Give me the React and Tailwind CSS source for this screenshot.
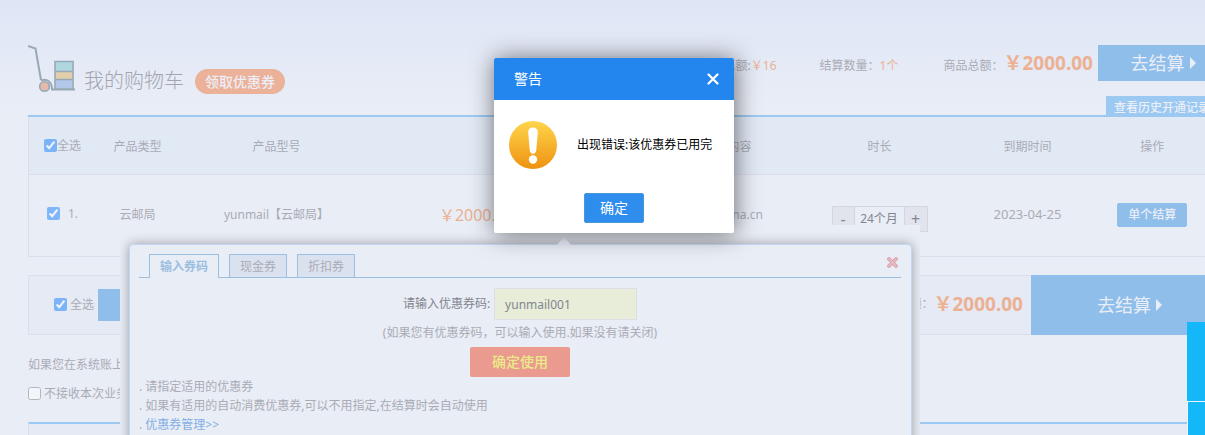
import React from "react";

const FONT = "font-['Noto_Sans','Noto_Sans_CJK_SC',sans-serif]";

function CartIcon() {
  return (
    <svg width="48" height="48" viewBox="0 0 48 48" fill="none" className="shrink-0" aria-hidden="true">
      <path d="M0 1 L7.500 3.500 L13 35" stroke="#98a9b6" strokeWidth="2" />
      <path d="M13 35.500 C19 33 24 37 24 44.500 H47" stroke="#98a9b6" strokeWidth="2" />
      <path d="M14 38 C18 37 21 40 21.500 44" stroke="#98a9b6" strokeWidth="1" />
      <rect x="27" y="17" width="17.500" height="9.500" fill="#b0d7e0" />
      <rect x="27" y="27" width="17.500" height="7" fill="#e2cea9" />
      <rect x="27" y="35" width="17.500" height="8.500" fill="#b3c7ea" />
      <path d="M27 16.500 H45 V44 H27 Z M27 26.500 H45 M27 34.500 H45" stroke="#98a9b6" strokeWidth="1.600" />
      <circle cx="16.500" cy="41.500" r="4.800" fill="#e6b9a8" stroke="#98a9b6" strokeWidth="1.600" />
    </svg>
  );
}

function Arrow() {
  return (
    <svg width="6" height="12" viewBox="0 0 6 12" aria-hidden="true">
      <path d="M0 0 L6 6 L0 12 Z" fill="#e9edf6" />
    </svg>
  );
}

function Check({ label, checked, gap }) {
  return (
    <label className={"inline-flex items-center whitespace-nowrap " + gap}>
      <input type="checkbox" defaultChecked={checked} className="m-0 size-[13px] opacity-45" />
      {label}
    </label>
  );
}

function Header() {
  return (
    <header className="relative flex h-[115px] items-start">
      <div className="flex items-start pt-[45px]">
        <CartIcon />
        <h1 className="ml-2 mt-5 text-xl leading-8 font-light text-[#a3a5af]">我的购物车</h1>
        <button className="ml-[11px] mt-6 h-[25px] rounded-full bg-[#ecb199] px-2.5 text-sm leading-[25px] font-medium text-[#eceef7]">
          领取优惠券
        </button>
      </div>
      <div className="ml-auto flex items-start pt-[45px] leading-[42px]">
        <p className="mr-[43px]">总额:<span className="text-[#ecb193]">￥16</span></p>
        <p className="mr-[45px]">结算数量：<span className="text-[#ecb193]">1个</span></p>
        <p className="flex">
          商品总额：
          <strong className="mr-[5px] text-[19px] leading-9 font-bold text-[#ecb193]">￥2000.00</strong>
        </p>
        <button className="flex h-9 w-[130px] items-center justify-center gap-[5px] bg-[#8fbeeb] text-lg text-[#e9edf6]">
          去结算 <Arrow />
        </button>
      </div>
      <a href="#history" className="absolute right-0 bottom-0 h-[19px] w-[122px] overflow-hidden bg-[#9cc9f2] px-2 leading-6 font-medium whitespace-nowrap text-[#eceff8]">
        查看历史开通记录
      </a>
    </header>
  );
}

function CartTable() {
  return (
    <table className="w-full table-fixed border-collapse border-x border-b border-[#dcdfea] text-center">
      <colgroup>
        <col className="w-[58px]" />
        <col className="w-[102px]" />
        <col className="w-[176px]" />
        <col className="w-[224px]" />
        <col className="w-[86px]" />
        <col className="w-[106px]" />
        <col className="w-[198px]" />
        <col className="w-[98px]" />
        <col className="w-[152px]" />
      </colgroup>
      <thead>
        <tr className="h-[57px] border-b border-[#dcdfea] bg-[#e1e9f5] *:p-0 *:pt-[3px] *:font-normal">
          <th className="text-left"><span className="pl-[15px]"><Check label="全选" checked gap="gap-0" /></span></th>
          <th>产品类型</th>
          <th>产品型号</th>
          <th></th>
          <th></th>
          <th>服务内容</th>
          <th>时长</th>
          <th>到期时间</th>
          <th>操作</th>
        </tr>
      </thead>
      <tbody>
        <tr className="h-[82px] *:p-0">
          <td className="text-left"><span className="pl-[18px]"><Check label="1." checked gap="gap-2" /></span></td>
          <td>云邮局</td>
          <td>yunmail【云邮局】</td>
          <td className="text-base text-[#ecb193]">￥2000.00</td>
          <td></td>
          <td><span className="pl-6">china.cn</span></td>
          <td>
            <div className="mx-auto mt-2 flex h-[26px] w-24 border border-[#d3d6df] text-[#83858e]">
              <button className="w-[22px] border-r border-[#d3d6df] bg-[#e1e4ed] text-base leading-5">-</button>
              <span className="flex-1 leading-6">24个月</span>
              <button className="w-[23px] border-l border-[#d3d6df] bg-[#e1e4ed] text-base leading-6">+</button>
            </div>
          </td>
          <td className="text-[13px]">2023-04-25</td>
          <td><button className="h-6 w-[70px] rounded-xs bg-[#8fbeeb] leading-6 font-medium text-[#e9edf6]">单个结算</button></td>
        </tr>
      </tbody>
    </table>
  );
}

function SummaryBar() {
  return (
    <div className="mt-[18px] flex h-[60px] items-center border-y border-l border-[#dcdfea] bg-[#e5eaf5]">
      <span className="pt-[3px] pl-[25px]"><Check label="全选" checked gap="gap-[3px]" /></span>
      <button className="ml-1 h-8 w-24 bg-[#8fbeeb] text-sm font-medium text-[#e9edf6]">结算</button>
      <p className="ml-auto flex items-center">
        总额：
        <strong className="mr-2 text-[19px] font-bold text-[#ecb193]">￥2000.00</strong>
      </p>
      <button className="flex h-[60px] w-[197px] items-center justify-center gap-[5px] bg-[#8fbeeb] text-lg text-[#e9edf6]">
        去结算 <Arrow />
      </button>
    </div>
  );
}

function CouponPanel() {
  return (
    <section className="absolute top-[225px] left-[120px] h-[230px] w-[800px] overflow-hidden bg-[#e9edf6] px-[9px] pt-[19px]">
      <svg width="16" height="9" viewBox="0 0 16 9" className="absolute top-3 left-[436px] z-10" aria-hidden="true">
        <path d="M0 9 L8 0 L16 9 Z" fill="#e9edf6" />
      </svg>
      <div className="h-[230px] w-[783px] rounded-t border border-[#c3d5f7] bg-[#e9edf6] pt-[9px] pr-2.5 pl-[9px] shadow-[0_0_12px_rgba(0,0,0,0.35)]">
        <div className="flex h-6 items-start border-b border-[#9bbfe0] pl-2.5 leading-[23px]" role="tablist">
          <button role="tab" className="mr-2.5 h-6 w-[70px] border border-b-0 border-[#9bbfe0] bg-[#e9edf6] font-bold text-[#9bbfe0]">输入券码</button>
          <button role="tab" className="mr-2.5 h-6 w-[58px] border border-[#9bbfe0] bg-[#dbe2ef]">现金券</button>
          <button role="tab" className="h-6 w-[58px] border border-[#9bbfe0] bg-[#dbe2ef]">折扣券</button>
          <button aria-label="关闭" className="mt-[3px] ml-auto mr-[3px]">
            <svg width="11" height="11" viewBox="0 0 11 11">
              <path d="M2 2 L9 9 M9 2 L2 9" stroke="#d9a0ab" strokeWidth="3.800" strokeLinecap="round" />
              <path d="M2 2 L9 9 M9 2 L2 9" stroke="#e6b9c1" strokeWidth="1.800" strokeLinecap="round" />
            </svg>
          </button>
        </div>
        <div className="mt-2.5 flex items-center justify-center gap-1">
          <label htmlFor="coupon" className="text-[#83858e]">请输入优惠券码:</label>
          <input id="coupon" defaultValue="yunmail001" className="h-8 w-[143px] border border-[#dcdfe6] bg-[#e8edda] px-2.5 text-[#83858e]" />
        </div>
        <p className="mt-[3px] text-center leading-5">(如果您有优惠券码，可以输入使用.如果没有请关闭)</p>
        <button className="mx-auto mt-1 block h-[30px] w-[100px] rounded-xs bg-[#ea9a8f] text-sm font-medium text-[#eaeb88]">确定使用</button>
        <ul className="leading-[19px]">
          <li>. 请指定适用的优惠券</li>
          <li>. 如果有适用的自动消费优惠券,可以不用指定,在结算时会自动使用</li>
          <li>. <a href="#coupons" className="text-[#84afe2]">优惠券管理&gt;&gt;</a></li>
        </ul>
      </div>
    </section>
  );
}

function AlertDialog() {
  return (
    <div role="alertdialog" aria-labelledby="alert-title" className="absolute top-[58px] left-[494px] z-20 w-60 rounded-xs bg-white text-black shadow-[1px_1px_24px_rgba(0,0,0,0.55)]">
      <div className="flex h-[42px] items-center justify-between rounded-t-xs bg-[#2385ee] pr-[15px] pl-5 text-white">
        <h2 id="alert-title" className="text-sm">警告</h2>
        <button aria-label="关闭窗口">
          <svg width="12" height="12" viewBox="0 0 12 12" fill="none" stroke="#fff" strokeWidth="2.200" strokeLinecap="round">
            <path d="M1.500 1.500 L10.500 10.500 M10.500 1.500 L1.500 10.500" />
          </svg>
        </button>
      </div>
      <div className="flex items-center gap-5 px-[15px] pt-[21px]">
        <svg width="48" height="48" viewBox="0 0 48 48" className="shrink-0" aria-hidden="true">
          <defs>
            <linearGradient id="warn" x1="0" y1="0" x2="0" y2="1">
              <stop offset="0" stopColor="#ffd54c" />
              <stop offset="1" stopColor="#ee9210" />
            </linearGradient>
          </defs>
          <circle cx="24" cy="24" r="24" fill="url(#warn)" />
          <path d="M24 6.500 C27 6.500 29 8.500 28.800 11.500 L27.300 29 C27 31.500 25.800 32.800 24 32.800 C22.200 32.800 21 31.500 20.700 29 L19.200 11.500 C19 8.500 21 6.500 24 6.500 Z" fill="#fff" />
          <circle cx="24" cy="38.500" r="4.200" fill="#fff" />
        </svg>
        <p className="whitespace-nowrap">出现错误:该优惠券已用完</p>
      </div>
      <div className="flex justify-center pt-6 pb-2.5">
        <button className="h-[30px] w-[60px] rounded-xs border border-[#4898d5] bg-[#2e8ded] text-sm text-white">确定</button>
      </div>
    </div>
  );
}

export default function App() {
  return (
    <div className={"relative h-screen overflow-hidden bg-[#e9edf6] bg-linear-to-b from-[#dee6f6] to-[#e9edf6] to-[110px] text-xs text-[#aaacb5] " + FONT}>
      <main className="ml-7 min-w-[1200px]">
        <Header />
        <div className="border-t-2 border-[#9cc9f2]">
          <CartTable />
        </div>
        <SummaryBar />
        <p className="mt-5 leading-5">如果您在系统账上</p>
        <p className="mt-[9px] leading-5"><Check label="不接收本次业务" gap="gap-[3px]" /></p>
        <div className="mt-4 h-10 border-t-2 border-l border-t-[#9cc9f2] border-l-[#dcdfea] bg-[#e5eaf5]" />
      </main>
      <CouponPanel />
      <AlertDialog />
      <aside className="absolute right-0 bottom-0 flex w-[18px] flex-col items-end bg-[#eef6fd]">
        <div className="h-[79px] w-full bg-[#14b7f8]" />
        <div className="mt-px h-[33px] w-[17px] bg-[#14b7f8]" />
      </aside>
    </div>
  );
}
